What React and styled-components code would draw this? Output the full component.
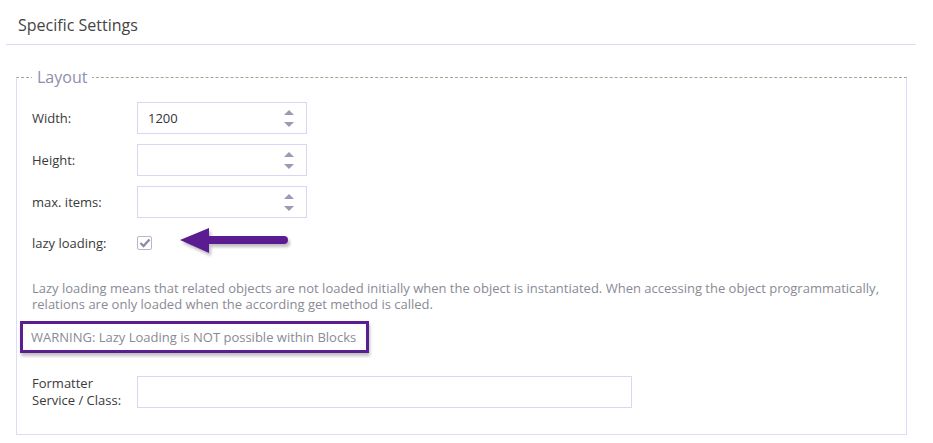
import React from 'react'
import styled, { createGlobalStyle } from 'styled-components'

const Global = createGlobalStyle`
  body {
    margin: 0;
    background: #fff;
    font-family: "Open Sans", "Noto Sans", sans-serif;
    color: #3b3b3b;
  }
`

const fields = [
    { label: 'Width:', value: '1200' },
    { label: 'Height:', value: '' },
    { label: 'max. items:', value: '' },
]

const App = () => {
  return (
    <Page>
        <Global />
        <Header>Specific Settings</Header>

        <Fieldset>
            <Legend>Layout</Legend>

            {fields.map(f => (
                <Row key={f.label}>
                    <Label>{f.label}</Label>
                    <NumberBox>
                        <span>{f.value}</span>
                        <Spinner>
                            <Tri up />
                            <Tri />
                        </Spinner>
                    </NumberBox>
                </Row>
            ))}

            <Row tight>
                <Label>lazy loading:</Label>
                <Check>
                    <svg width="12" height="10" viewBox="0 0 12 10">
                        <path d="M1.5 5 L4.5 8 L10.5 1.5" fill="none" stroke="#8c8ca6" strokeWidth="2.4" />
                    </svg>
                </Check>
                <Arrow width="114" height="32" viewBox="0 0 114 32">
                    <defs>
                        <filter id="sh" x="-10%" y="-30%" width="130%" height="180%">
                            <feDropShadow dx="2" dy="3" stdDeviation="1.5" floodColor="#000" floodOpacity="0.25" />
                        </filter>
                    </defs>
                    <path d="M2 14 L31 2 L31 10 L106 10 A4 4 0 0 1 106 18 L31 18 L31 27 Z" fill="#5b1e91" filter="url(#sh)" />
                </Arrow>
            </Row>

            <Hint>
                Lazy loading means that related objects are not loaded initially when the object is instantiated. When accessing the object programmatically,
                relations are only loaded when the according get method is called.
            </Hint>

            <Warning>WARNING: Lazy Loading is NOT possible within Blocks</Warning>

            <Row wide>
                <Label>Formatter<br />Service / Class:</Label>
                <TextBox />
            </Row>
        </Fieldset>
    </Page>
  )
}

const Page = styled.div`
width: 933px;
height: 443px;
overflow: hidden;
`

const Header = styled.div`
margin: 0 17px 0 6px;
padding: 14px 0 0 12px;
height: 30px;
font-size: 16px;
color: #444;
border-bottom: 1px solid #dcdcf6;
`

const Fieldset = styled.fieldset`
box-sizing: border-box;
margin: 22px 0 0 16px;
width: 891px;
height: 368px;
padding: 15px 15px 0 15px;
border: 1px solid #dcdcf6;
border-top: 1px dashed #a6a592;
`

const Legend = styled.legend`
margin-left: 0;
padding: 0 5px;
font-size: 16px;
line-height: 20px;
color: #8e8eac;
`

const Row = styled.div`
display: flex;
align-items: center;
min-height: ${p => p.tight ? '28px' : '32px'};
margin-top: ${p => p.wide ? '22px' : '10px'};

&:first-of-type {
    margin-top: 0;
}
`

const Label = styled.div`
width: 105px;
flex-shrink: 0;
font-size: 13px;
line-height: 17px;
color: #3a3a3a;
`

const NumberBox = styled.div`
box-sizing: border-box;
width: 170px;
height: 32px;
border: 1px solid #d8d8f4;
display: flex;
align-items: center;
justify-content: space-between;
padding: 0 12px 0 10px;
font-size: 13px;
color: #333;
`

const Spinner = styled.div`
display: flex;
flex-direction: column;
gap: 7px;
`

const Tri = styled.div`
width: 0;
height: 0;
border-left: 5px solid transparent;
border-right: 5px solid transparent;
${p => p.up ? 'border-bottom: 5px solid #9a9ab4;' : 'border-top: 5px solid #9a9ab4;'}
`

const Check = styled.div`
box-sizing: border-box;
width: 15px;
height: 14px;
border: 1px solid #b8b8cc;
border-radius: 2px;
display: flex;
align-items: center;
justify-content: center;
`

const Arrow = styled.svg`
margin-left: 26px;
margin-top: -2px;
`

const Hint = styled.p`
margin: 22px 0 0 0;
font-size: 13px;
line-height: 16px;
color: #8a8a96;
`

const Warning = styled.div`
display: inline-block;
margin: 9px 0 0 -12px;
padding: 5px 10px 5px 8px;
border: 3px solid #5b1e91;
box-shadow: 1px 3px 3px rgba(0, 0, 0, 0.25);
font-size: 13px;
line-height: 16px;
color: #8a8a96;
`

const TextBox = styled.div`
box-sizing: border-box;
width: 495px;
height: 32px;
border: 1px solid #d8d8f4;
`

export default App
